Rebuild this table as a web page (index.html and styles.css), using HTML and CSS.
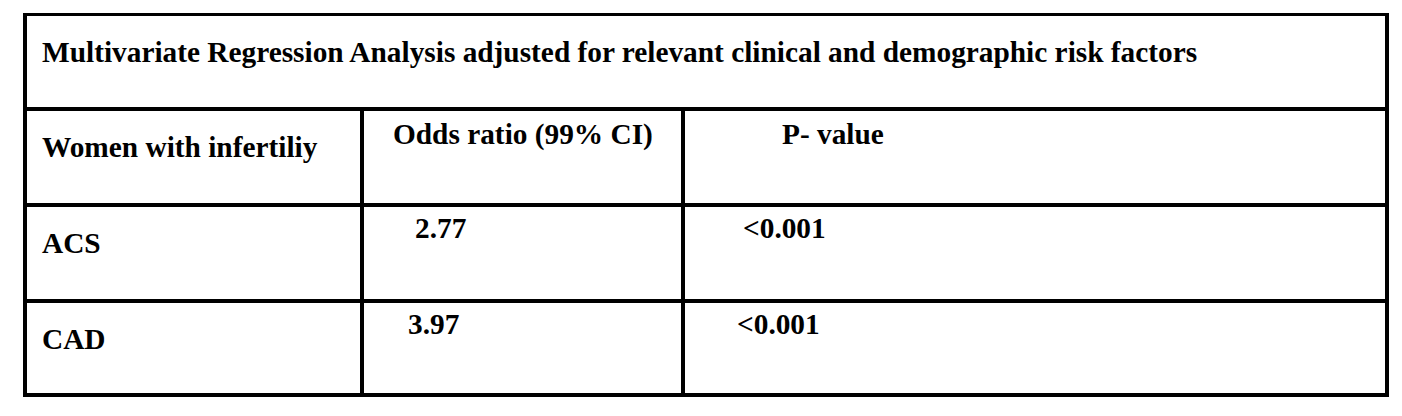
FILE: index.html
```html
<!DOCTYPE html>
<html lang="en">
<head>
<meta charset="utf-8">
<title>Multivariate Regression Analysis</title>
<link rel="stylesheet" href="styles.css">
</head>
<body>
<div class="table">
  <div class="title-row">
    <p class="cell-text">Multivariate Regression Analysis adjusted for relevant clinical and demographic risk factors</p>
  </div>
  <div class="row row--head">
    <div class="cell cell--label"><p class="cell-text">Women with infertiliy</p></div>
    <div class="cell cell--odds"><p class="cell-text pad-odds-head">Odds ratio (99% CI)</p></div>
    <div class="cell cell--p"><p class="cell-text pad-p-head">P- value</p></div>
  </div>
  <div class="row">
    <div class="cell cell--label"><p class="cell-text">ACS</p></div>
    <div class="cell cell--odds"><p class="cell-text pad-odds-acs">2.77</p></div>
    <div class="cell cell--p"><p class="cell-text pad-p-acs">&lt;0.001</p></div>
  </div>
  <div class="row row--last">
    <div class="cell cell--label"><p class="cell-text">CAD</p></div>
    <div class="cell cell--odds"><p class="cell-text pad-odds-cad">3.97</p></div>
    <div class="cell cell--p"><p class="cell-text pad-p-cad">&lt;0.001</p></div>
  </div>
</div>
</body>
</html>
```
FILE: styles.css
```css
html, body {
  margin: 0;
  padding: 0;
  background: #fff;
}

body {
  padding: 13px 0 0 23px;
  font-family: "Liberation Serif", "Times New Roman", serif;
  font-weight: bold;
  font-size: 29.33px;
  line-height: 32px;
  color: #000;
}

.table {
  box-sizing: border-box;
  width: 1366px;
  border: 4px solid #000;
  border-top-width: 3px;
}

.cell-text {
  margin: 0;
  white-space: nowrap;
}

.title-row {
  height: 91px;
  box-sizing: border-box;
  padding: 20px 0 0 15px;
}

.row {
  display: grid;
  grid-template-columns: 333px 321px 1fr;
  height: 96px;
  box-sizing: border-box;
  border-top: 4px solid #000;
}

.row--last {
  height: 94px;
}

.cell {
  box-sizing: border-box;
}

.cell--label {
  padding: 20px 0 0 15px;
}

.cell--odds,
.cell--p {
  border-left: 4px solid #000;
  padding-top: 5px;
}

.row--head .cell--odds,
.row--head .cell--p {
  padding-top: 7px;
}

.pad-odds-head { padding-left: 29px; }
.pad-p-head { padding-left: 97px; }
.pad-odds-acs { padding-left: 51px; }
.pad-p-acs { padding-left: 58px; }
.pad-odds-cad { padding-left: 44px; }
.pad-p-cad { padding-left: 52px; }
```
